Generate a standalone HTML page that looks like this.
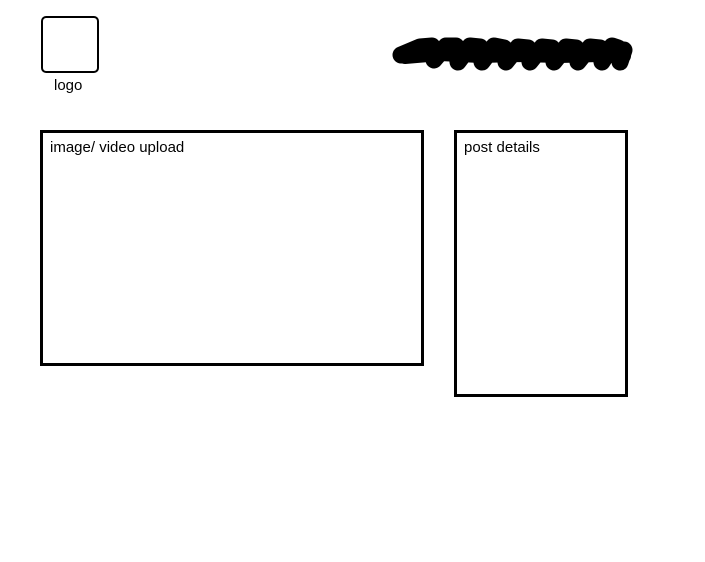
<!DOCTYPE html>
<html><head><meta charset="utf-8"><style>
body{margin:0;width:705px;height:562px;background:#fff;position:relative;overflow:hidden;font-family:"Liberation Sans",sans-serif;color:#000}
.b{position:absolute;border:3px solid #000;box-sizing:border-box}
.t{position:absolute;font-size:15px}
</style></head><body>
<div class="b" style="left:41px;top:16px;width:58px;height:57px;border-radius:5px;border-width:2.5px"></div>
<div class="t" style="left:54px;top:77px">logo</div>
<div class="b" style="left:40px;top:130px;width:384px;height:236px"></div>
<div class="t" style="left:50px;top:139px">image/ video upload</div>
<div class="b" style="left:454px;top:130px;width:174px;height:267px"></div>
<div class="t" style="left:464px;top:139px">post details</div>
<svg style="position:absolute;left:0;top:0" width="705" height="562">
<g fill="none" stroke="#000" stroke-linecap="round" stroke-linejoin="round">
<polyline stroke-width="17" points="401,55 420,47 432,46 434,60 446,46 456,46 458,62 470,46 480,47 482,62 494,46 504,48 506,62 518,47 528,48 530,62 542,47 552,48 554,62 566,47 576,48 578,62 590,47 600,48 602,62 612,46 618,48 620,62 624,50"/>
<polyline stroke-width="14" points="405,57 440,54 480,56 520,55 560,56 600,55 624,56"/>
</g>
</svg>
</body></html>
